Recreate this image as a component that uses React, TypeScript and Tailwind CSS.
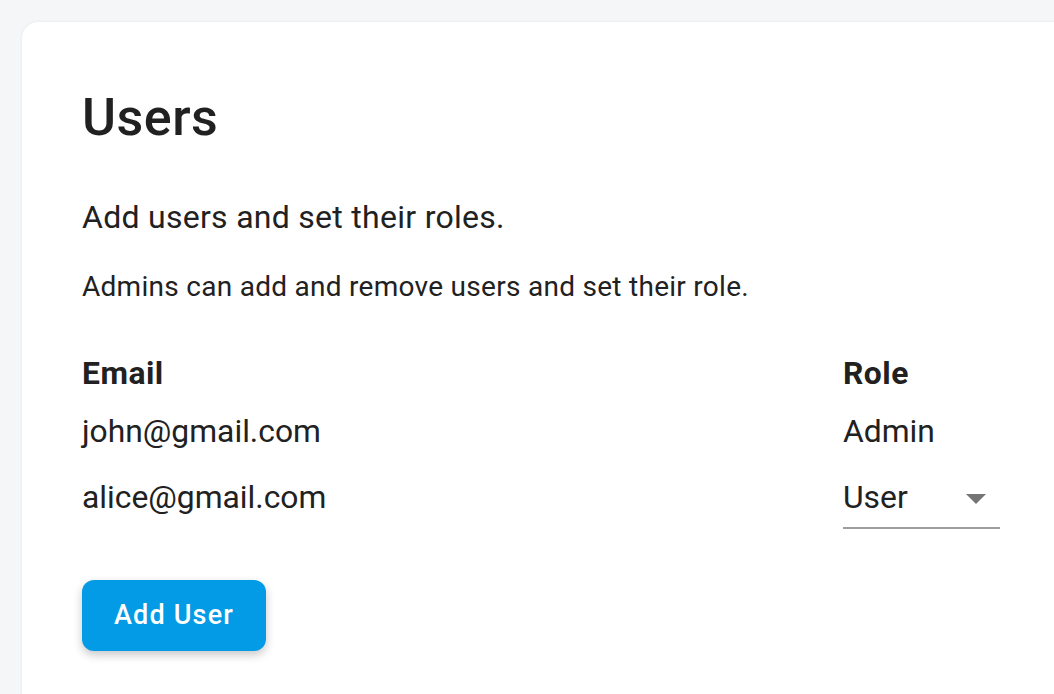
import React from 'react';

const users = [
  { email: 'john@gmail.com', role: 'Admin', editable: false },
  { email: 'alice@gmail.com', role: 'User', editable: true },
];

const App: React.FC = () => {
  return (
    <div className="min-h-screen w-full bg-[#f5f6f8] pt-[22px] pl-[22px] font-['Roboto',sans-serif] text-[#212121] overflow-hidden">
      <div className="bg-white rounded-tl-[16px] w-[1100px] min-h-[700px] pl-[60px] pt-[66px] shadow-[0_0_3px_rgba(0,0,0,0.08)]">
        {/* Header */}
        <h1 className="text-[52px] leading-[60px] font-medium tracking-[0.5px]">Users</h1>
        <p className="mt-[49px] text-[32px] leading-[40px] tracking-[0.28px]">Add users and set their roles.</p>
        <p className="mt-[32px] text-[28px] leading-[36px] tracking-[0.28px]">Admins can add and remove users and set their role.</p>

        {/* Table */}
        <div className="mt-[48px] w-[918px] text-[31.8px] leading-[40px]">
          <div className="grid grid-cols-[761px_157px] font-bold tracking-[0.5px]">
            <div>Email</div>
            <div>Role</div>
          </div>
          <div className="mt-[18px] flex flex-col gap-[26px]">
            {users.map((u) => (
              <div key={u.email} className="grid grid-cols-[761px_157px] items-start">
                <div>{u.email}</div>
                {u.editable ? (
                  <div className="relative border-b-2 border-[#9e9e9e] pb-[10px]">
                    <span>{u.role}</span>
                    <svg className="absolute right-[14px] top-[17px]" width="20" height="10" viewBox="0 0 20 10">
                      <path d="M0 0 L20 0 L10 10 Z" fill="#757575" />
                    </svg>
                  </div>
                ) : (
                  <div>{u.role}</div>
                )}
              </div>
            ))}
          </div>
        </div>

        <button className="mt-[51px] h-[71px] w-[184px] rounded-[12px] bg-[#039be5] text-white text-[27px] font-medium tracking-[1.2px] shadow-[0_4px_10px_rgba(0,0,0,0.22)]">
          Add User
        </button>
      </div>
    </div>
  );
};

export default App;
